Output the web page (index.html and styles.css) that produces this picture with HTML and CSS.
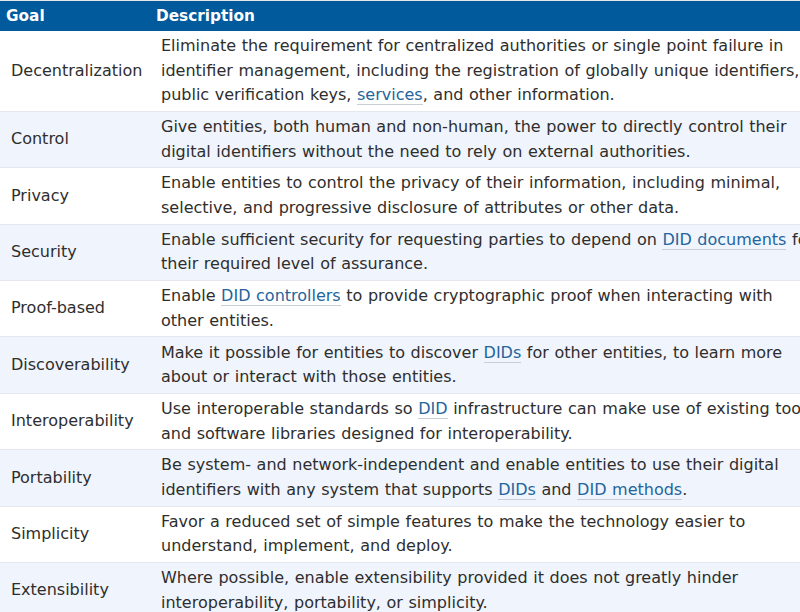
FILE: index.html
```html
<!DOCTYPE html>
<html>
<head>
<meta charset="utf-8">
<link rel="stylesheet" href="styles.css">
</head>
<body>
<table class="goals">
  <thead>
    <tr><th class="goal">Goal</th><th>Description</th></tr>
  </thead>
  <tbody>
    <tr><td class="goal">Decentralization</td><td>Eliminate the requirement for centralized authorities or single point failure in identifier management, including the registration of globally unique identifiers, public verification keys, <a href="#">services</a>, and other information.</td></tr>
    <tr><td class="goal">Control</td><td>Give entities, both human and non-human, the power to directly control their digital identifiers without the need to rely on external authorities.</td></tr>
    <tr><td class="goal">Privacy</td><td>Enable entities to control the privacy of their information, including minimal, selective, and progressive disclosure of attributes or other data.</td></tr>
    <tr><td class="goal">Security</td><td>Enable sufficient security for requesting parties to depend on <a href="#">DID documents</a> for their required level of assurance.</td></tr>
    <tr><td class="goal">Proof-based</td><td>Enable <a href="#">DID controllers</a> to provide cryptographic proof when interacting with other entities.</td></tr>
    <tr><td class="goal">Discoverability</td><td>Make it possible for entities to discover <a href="#">DIDs</a> for other entities, to learn more about or interact with those entities.</td></tr>
    <tr><td class="goal">Interoperability</td><td>Use interoperable standards so <a href="#">DID</a> infrastructure can make use of existing tools and software libraries designed for interoperability.</td></tr>
    <tr><td class="goal">Portability</td><td>Be system- and network-independent and enable entities to use their digital identifiers with any system that supports <a href="#">DIDs</a> and <a href="#">DID methods</a>.</td></tr>
    <tr><td class="goal">Simplicity</td><td>Favor a reduced set of simple features to make the technology easier to understand, implement, and deploy.</td></tr>
    <tr><td class="goal">Extensibility</td><td>Where possible, enable extensibility provided it does not greatly hinder interoperability, portability, or simplicity.</td></tr>
  </tbody>
</table>
</body>
</html>
```
FILE: styles.css
```css
html, body {
  margin: 0;
  padding: 0;
  background: #ffffff;
  overflow: hidden;
}
body {
  width: 800px;
  height: 612px;
  font-family: "DejaVu Sans", Verdana, sans-serif;
  font-size: 16px;
  color: #2e2e2e;
}
.goals {
  border-collapse: collapse;
  width: 828px;
  border-top: 1px solid #e6e6e6;
  table-layout: fixed;
}
.goals th {
  background: #005a9c;
  color: #fff;
  font-weight: bold;
  font-size: 15.3px;
  text-align: left;
  padding: 3px 6px 3px 6px;
  line-height: 24px;
}
.goals th.goal {
  width: 138px;
}
.goals td {
  padding: 3.1px 10px 3.1px 11px;
  line-height: 24.6px;
  border-bottom: 1px solid #e4e8ee;
  vertical-align: middle;
  word-spacing: 0.5px;
}
.goals td.goal {
  padding-right: 6px;
  white-space: nowrap;
  word-spacing: 0;
}
.goals tbody tr:nth-child(2n) {
  background: #f0f4fc;
}
.goals a {
  color: #23659c;
  text-decoration: none;
  border-bottom: 1px solid #c8cfd8;
}
```
